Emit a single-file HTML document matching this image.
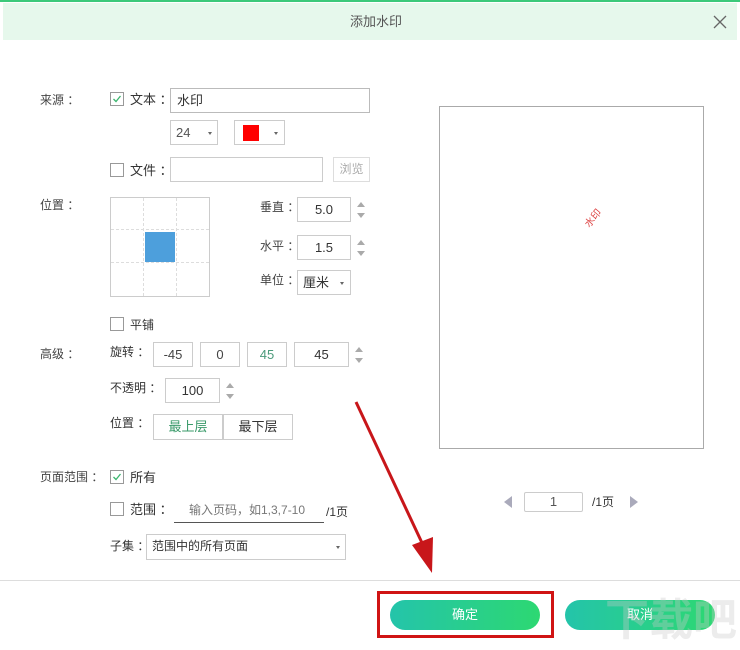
<!DOCTYPE html>
<html><head><meta charset="utf-8"><style>
*{box-sizing:border-box;margin:0;padding:0}
body{width:740px;height:650px;background:#fff;position:relative;overflow:hidden;font-family:"Liberation Sans","Noto Sans CJK SC",sans-serif;font-size:12px;color:#333}
.a{position:absolute}
.t{position:absolute;line-height:14px;white-space:nowrap}
.cb{position:absolute;width:14px;height:14px;border:1px solid #999;background:#fff}
.box{position:absolute;border:1px solid #ccc;background:#fff;text-align:center;line-height:23px;font-size:13px}
.sp{position:absolute;width:0;height:0;border-left:4px solid transparent;border-right:4px solid transparent}
.up{border-bottom:5px solid #aaa}.dn{border-top:5px solid #aaa}
.dd{position:absolute;width:0;height:0;border-left:2px solid transparent;border-right:2px solid transparent;border-top:3px solid #666}
</style></head><body>
<div class="a" style="left:0;top:0;width:740px;height:2px;background:#3cc97a"></div>
<div class="a" style="left:3px;top:3px;width:734px;height:37px;background:#e6f8ec"></div>
<div class="t" style="left:350px;top:15px;font-size:13px;color:#555">添加水印</div>
<svg class="a" style="left:713px;top:15px" width="14" height="14"><path d="M1 1L13 13M13 1L1 13" stroke="#666" stroke-width="1.3"/></svg>

<div class="t" style="left:40px;top:93px;color:#444">来源 ：</div>
<div class="cb" style="left:110px;top:92px"></div>
<svg class="a" style="left:112px;top:94px" width="10" height="10"><path d="M1.5 5L4 7.5L8.5 2" stroke="#3bb56e" stroke-width="1.3" fill="none"/></svg>
<div class="t" style="left:130px;top:93px;font-size:13px">文本 ：</div>
<div class="box" style="left:170px;top:88px;width:200px;height:25px;text-align:left;padding-left:6px;border-color:#bbb">水印</div>
<div class="box" style="left:170px;top:120px;width:48px;height:25px;text-align:left;padding-left:5px;color:#555">24</div>
<div class="dd" style="left:208px;top:132px"></div>
<div class="box" style="left:234px;top:120px;width:51px;height:25px"></div>
<div class="a" style="left:243px;top:125px;width:16px;height:16px;background:#f00"></div>
<div class="dd" style="left:274px;top:132px"></div>

<div class="cb" style="left:110px;top:163px"></div>
<div class="t" style="left:130px;top:164px;font-size:13px">文件 ：</div>
<div class="box" style="left:170px;top:157px;width:153px;height:25px"></div>
<div class="box" style="left:333px;top:157px;width:37px;height:25px;color:#aaa;border-color:#ddd;font-size:12px">浏览</div>

<div class="t" style="left:40px;top:198px;color:#444">位置 ：</div>
<div class="a" style="left:110px;top:197px;width:100px;height:100px;border:1px solid #ccc"></div>
<div class="a" style="left:143px;top:198px;height:98px;border-left:1px dashed #ddd"></div>
<div class="a" style="left:176px;top:198px;height:98px;border-left:1px dashed #ddd"></div>
<div class="a" style="left:111px;top:229px;width:98px;border-top:1px dashed #ddd"></div>
<div class="a" style="left:111px;top:262px;width:98px;border-top:1px dashed #ddd"></div>
<div class="a" style="left:145px;top:232px;width:30px;height:30px;background:#4d9fdc"></div>

<div class="t" style="left:260px;top:200px;color:#444">垂直 ：</div>
<div class="box" style="left:297px;top:197px;width:54px;height:25px">5.0</div>
<div class="sp up" style="left:357px;top:202px"></div><div class="sp dn" style="left:357px;top:213px"></div>
<div class="t" style="left:260px;top:239px;color:#444">水平 ：</div>
<div class="box" style="left:297px;top:235px;width:54px;height:25px">1.5</div>
<div class="sp up" style="left:357px;top:240px"></div><div class="sp dn" style="left:357px;top:251px"></div>
<div class="t" style="left:260px;top:273px;color:#444">单位 ：</div>
<div class="box" style="left:297px;top:270px;width:54px;height:25px;text-align:left;padding-left:5px">厘米</div>
<div class="dd" style="left:340px;top:282px"></div>

<div class="cb" style="left:110px;top:317px"></div>
<div class="t" style="left:130px;top:318px">平铺</div>
<div class="t" style="left:40px;top:347px;color:#444">高级 ：</div>
<div class="t" style="left:110px;top:345px">旋转 ：</div>
<div class="box" style="left:153px;top:342px;width:40px;height:25px;color:#444">-45</div>
<div class="box" style="left:200px;top:342px;width:40px;height:25px;color:#444">0</div>
<div class="box" style="left:247px;top:342px;width:40px;height:25px;color:#4a9a7a">45</div>
<div class="box" style="left:294px;top:342px;width:55px;height:25px">45</div>
<div class="sp up" style="left:355px;top:347px"></div><div class="sp dn" style="left:355px;top:358px"></div>
<div class="t" style="left:110px;top:381px">不透明 ：</div>
<div class="box" style="left:165px;top:378px;width:55px;height:25px">100</div>
<div class="sp up" style="left:226px;top:383px"></div><div class="sp dn" style="left:226px;top:394px"></div>
<div class="t" style="left:110px;top:416px">位置 ：</div>
<div class="box" style="left:153px;top:414px;width:70px;height:26px;color:#3a9a6a">最上层</div>
<div class="box" style="left:223px;top:414px;width:70px;height:26px">最下层</div>

<div class="t" style="left:40px;top:470px;color:#444">页面范围 ：</div>
<div class="cb" style="left:110px;top:470px"></div>
<svg class="a" style="left:112px;top:472px" width="10" height="10"><path d="M1.5 5L4 7.5L8.5 2" stroke="#3bb56e" stroke-width="1.3" fill="none"/></svg>
<div class="t" style="left:130px;top:471px;font-size:13px">所有</div>
<div class="cb" style="left:110px;top:502px"></div>
<div class="t" style="left:130px;top:503px;font-size:13px">范围 ：</div>
<div class="t" style="left:189px;top:503px;color:#777">输入页码，如1,3,7-10</div>
<div class="a" style="left:174px;top:522px;width:150px;border-top:1px solid #555"></div>
<div class="t" style="left:326px;top:505px">/1页</div>
<div class="t" style="left:110px;top:539px">子集 ：</div>
<div class="box" style="left:146px;top:534px;width:200px;height:26px;text-align:left;padding-left:5px;font-size:12px">范围中的所有页面</div>
<div class="dd" style="left:336px;top:546px"></div>

<div class="a" style="left:439px;top:106px;width:265px;height:343px;border:1px solid #aaa"></div>
<div class="t" style="left:584px;top:212px;font-size:10px;color:#d44;transform:rotate(-50deg)">水印</div>
<div class="a" style="left:504px;top:496px;width:0;height:0;border-top:6px solid transparent;border-bottom:6px solid transparent;border-right:8px solid #aab"></div>
<div class="box" style="left:524px;top:492px;width:59px;height:20px;line-height:18px;border-radius:2px;color:#555">1</div>
<div class="t" style="left:592px;top:495px">/1页</div>
<div class="a" style="left:630px;top:496px;width:0;height:0;border-top:6px solid transparent;border-bottom:6px solid transparent;border-left:8px solid #aab"></div>

<div class="a" style="left:0;top:580px;width:740px;border-top:1px solid #ddd"></div>
<div class="a" style="left:390px;top:600px;width:150px;height:30px;border-radius:15px;background:linear-gradient(90deg,#24c4aa,#2dd872);color:#fff;text-align:center;line-height:30px;font-size:13px">确定</div>
<div class="a" style="left:565px;top:600px;width:150px;height:30px;border-radius:15px;background:linear-gradient(90deg,#24c4aa,#2dd872);color:#fff;text-align:center;line-height:30px;font-size:13px">取消</div>
<div class="t" style="left:605px;top:596px;font-size:44px;line-height:50px;color:rgba(200,200,200,0.35);font-weight:bold">下载吧</div>
<div class="a" style="left:377px;top:591px;width:177px;height:47px;border:3px solid #d01414"></div>
<svg class="a" style="left:0;top:0" width="740" height="650"><line x1="356" y1="402" x2="423" y2="545" stroke="#c8161a" stroke-width="3"/><polygon points="432,573 412,545 433,537" fill="#c8161a"/></svg>
</body></html>
